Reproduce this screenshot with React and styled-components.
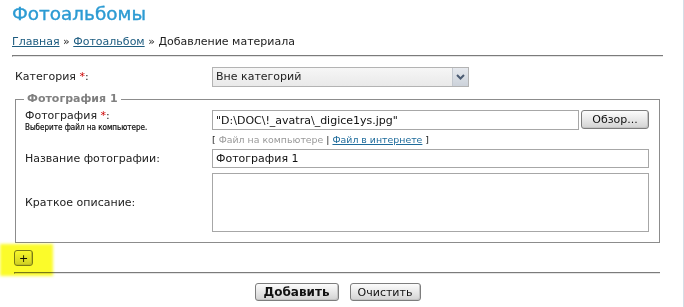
import styled, { createGlobalStyle } from 'styled-components'

const GlobalStyle = createGlobalStyle`
  html, body {
    margin: 0;
    padding: 0;
    background: #fff;
  }
  body {
    font-family: "DejaVu Sans", Verdana, sans-serif;
    color: #222;
  }
  * {
    box-sizing: border-box;
  }
`;

const Page = styled.div`
  display: flex;
  width: 684px;
  height: 307px;
  overflow: hidden;
`;

const Main = styled.div`
  flex: 1;
  padding: 0 20px 0 12px;
`;

const Edge = styled.div`
  width: 1px;
  background: #d6dde6;
`;

const Title = styled.h1`
  margin: 0;
  padding-top: 2px;
  font-size: 18.4px;
  line-height: 24px;
  font-weight: normal;
  color: #2c9bd3;
  -webkit-text-stroke: 0.4px #2c9bd3;
`;

const Crumbs = styled.div`
  margin-top: 9px;
  font-size: 11px;
  line-height: 14px;
  color: #222;

  a {
    color: #1d5c80;
    text-decoration: underline;
  }
`;

const Rule = styled.div`
  height: 2px;
  margin: ${({ $margin }) => $margin};
  border-top: 1px solid #7b7b7b;
  border-left: 1px solid #7b7b7b;
  border-bottom: 1px solid #e4e4e4;
`;

const Form = styled.form`
  margin: 0;
`;

const Row = styled.div`
  display: grid;
  grid-template-columns: ${({ $label }) => $label}px 1fr;
  align-items: ${({ $top }) => ($top ? 'start' : 'center')};
  margin-top: ${({ $gap }) => $gap || 0}px;
  padding-left: ${({ $indent }) => $indent || 0}px;
`;

const LabelBlock = styled.div`
  display: flex;
  flex-direction: column;
`;

const Label = styled.label`
  display: block;
  font-size: 11px;
  line-height: 12px;
  color: #222;
`;

const Hint = styled.div`
  font-family: "DejaVu Sans Condensed", "DejaVu Sans", sans-serif;
  font-size: 8px;
  line-height: 11px;
  color: #111;
  -webkit-text-stroke: 0.2px #111;
`;

const Star = styled.span`
  color: #cc0000;
`;

const Select = styled.div`
  display: flex;
  width: 257px;
  height: 20px;
  border: 1px solid #b3b3b3;
  background: linear-gradient(#f6f6f6, #e9e9e9);
  font-size: 11px;
  line-height: 18px;
`;

const SelectValue = styled.span`
  flex: 1;
  padding-left: 3px;
`;

const SelectArrow = styled.span`
  display: flex;
  align-items: center;
  justify-content: center;
  width: 16px;
  background: linear-gradient(#e6e9ee, #ccd2da);
  border-left: 1px solid #c3c8cf;
`;

const Group = styled.fieldset`
  margin: 5px 3px 0;
  padding: 4px 10px 10px 9px;
  border: 1px solid #8c8c8c;
  min-width: 0;
`;

const GroupTitle = styled.legend`
  margin-left: -1px;
  padding: 0 3px;
  font-size: 11px;
  line-height: 14px;
  font-weight: bold;
  color: #808080;
`;

const FileLine = styled.div`
  display: flex;
  gap: 2px;
`;

const TextBox = styled.input`
  flex: 1;
  width: 100%;
  height: ${({ $h }) => $h}px;
  border: 1px solid #a7a7a7;
  padding: 0 3px;
  font-family: "DejaVu Sans", Verdana, sans-serif;
  font-size: 11px;
  color: #111;
  background: #fff;
  outline: none;
`;

const TextArea = styled.textarea`
  display: block;
  width: 100%;
  height: 59px;
  border: 1px solid #a7a7a7;
  resize: none;
  outline: none;
`;

const Button = styled.button`
  width: ${({ $w }) => $w}px;
  height: ${({ $h }) => $h || 18}px;
  padding: 0;
  border: 1px solid #7d7d7d;
  border-radius: 3px;
  background: linear-gradient(#fcfcfc, #e4e4e4 60%, #d2d2d2);
  box-shadow: inset -1px -1px 0 #c4c4c4;
  font-family: "DejaVu Sans", Verdana, sans-serif;
  font-size: ${({ $bold }) => ($bold ? 12 : 11)}px;
  font-weight: ${({ $bold }) => ($bold ? 'bold' : 'normal')};
  color: #111;
  line-height: 1;
`;

const Sources = styled.div`
  margin-top: 1px;
  font-size: 9.4px;
  line-height: 12px;
  color: #222;

  span {
    color: #999;
  }

  a {
    color: #1e6b9b;
    text-decoration: underline;
  }
`;

const AddRow = styled.div`
  position: relative;
  display: flex;
  margin-top: 7px;
  padding-left: 2px;
  height: 16px;
`;

const Highlight = styled.div`
  position: absolute;
  left: -12px;
  top: -6px;
  width: 53px;
  height: 32px;
  background: #fbfb2a;
  filter: blur(1.5px);
  mix-blend-mode: multiply;
  pointer-events: none;
  z-index: 1;
`;

const Actions = styled.div`
  display: flex;
  justify-content: center;
  gap: 11px;
  margin-top: 9px;
`;

function Chevron() {
  return (
    <svg width="9" height="6" viewBox="0 0 9 6">
      <path d="M1 1 L4.5 4.5 L8 1" fill="none" stroke="#4b5b72" strokeWidth="2" />
    </svg>
  );
}

export default function App() {
  return (
    <Page>
      <GlobalStyle />
      <Main>
        <Title>Фотоальбомы</Title>
        <Crumbs>
          <a href="#">Главная</a> » <a href="#">Фотоальбом</a> » Добавление материала
        </Crumbs>
        <Rule $margin="6px 0 0 0" />

        <Form>
          <Row $label={197} $gap={10} $indent={3}>
            <Label>Категория <Star>*</Star>:</Label>
            <Select>
              <SelectValue>Вне категорий</SelectValue>
              <SelectArrow><Chevron /></SelectArrow>
            </Select>
          </Row>

          <Group>
            <GroupTitle>Фотография 1</GroupTitle>

            <Row $label={187} $top>
              <LabelBlock>
                <Label>Фотография <Star>*</Star>:</Label>
                <Hint>Выберите файл на компьютере.</Hint>
              </LabelBlock>
              <FileLine>
                <TextBox $h={20} readOnly value={'"D:\\DOC\\!_avatra\\_digice1ys.jpg"'} />
                <Button type="button" $w={68} $h={19}>Обзор...</Button>
              </FileLine>
            </Row>

            <Row $label={187}>
              <div />
              <Sources>
                [ <span>Файл на компьютере</span> | <a href="#">Файл в интернете</a> ]
              </Sources>
            </Row>

            <Row $label={187} $gap={3}>
              <Label>Название фотографии:</Label>
              <TextBox $h={19} readOnly value="Фотография 1" />
            </Row>

            <Row $label={187} $gap={5}>
              <Label>Краткое описание:</Label>
              <TextArea readOnly />
            </Row>
          </Group>

          <AddRow>
            <Button type="button" $w={19} $h={16}>+</Button>
            <Highlight />
          </AddRow>
          <Rule $margin="6px 3px 0 2px" />

          <Actions>
            <Button type="button" $w={84} $bold>Добавить</Button>
            <Button type="button" $w={71}>Очистить</Button>
          </Actions>
        </Form>
      </Main>
      <Edge />
    </Page>
  );
}
